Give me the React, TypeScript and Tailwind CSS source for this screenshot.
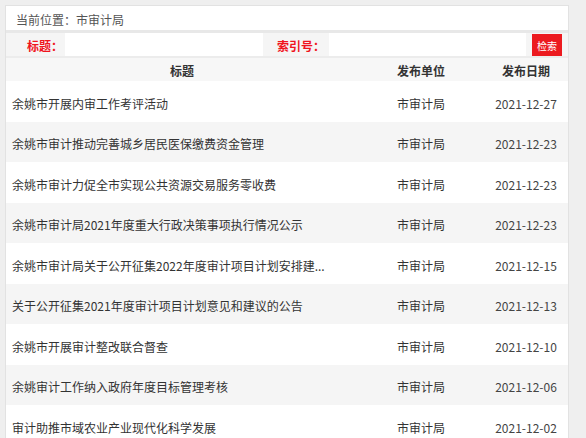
import React from "react";

type Article = {
  title: string;
  unit: string;
  date: string;
};

const ARTICLES: Article[] = [
  { title: "余姚市开展内审工作考评活动", unit: "市审计局", date: "2021-12-27" },
  { title: "余姚市审计推动完善城乡居民医保缴费资金管理", unit: "市审计局", date: "2021-12-23" },
  { title: "余姚市审计力促全市实现公共资源交易服务零收费", unit: "市审计局", date: "2021-12-23" },
  { title: "余姚市审计局2021年度重大行政决策事项执行情况公示", unit: "市审计局", date: "2021-12-23" },
  { title: "余姚市审计局关于公开征集2022年度审计项目计划安排建...", unit: "市审计局", date: "2021-12-15" },
  { title: "关于公开征集2021年度审计项目计划意见和建议的公告", unit: "市审计局", date: "2021-12-13" },
  { title: "余姚市开展审计整改联合督查", unit: "市审计局", date: "2021-12-10" },
  { title: "余姚审计工作纳入政府年度目标管理考核", unit: "市审计局", date: "2021-12-06" },
  { title: "审计助推市域农业产业现代化科学发展", unit: "市审计局", date: "2021-12-02" },
];

const FONT = "font-['Microsoft_YaHei','Noto_Sans_CJK_SC',sans-serif]";

export default function App() {
  return (
    <div className={`min-h-[438px] bg-[#efefef] pt-[5px] pl-[5px] pr-[17px] ${FONT}`}>
      <div className="border border-[#e2e2e2] bg-white">
        {/* breadcrumb */}
        <div className="flex h-[27px] items-center border-b-[3px] border-[#e8e8e8] pl-[10px] pt-[4px] text-[12px] text-[#555]">
          当前位置：市审计局
        </div>

        {/* search bar */}
        <div className="flex h-[25px] items-center border-b-[2px] border-[#ececec] bg-[#f5f5f5] text-[12px]">
          <span className="ml-[21px] w-[37px] pt-[3px] font-bold text-[#f0141e]">标题：</span>
          <input className="ml-[1px] h-[23px] w-[198px] bg-white outline-none" />
          <span className="ml-[14px] w-[52px] pt-[3px] font-bold text-[#f0141e]">索引号：</span>
          <input className="h-[23px] w-[197px] bg-white outline-none" />
          <button className="ml-[6px] flex h-[22px] w-[30px] items-center justify-center bg-[#ec1a1f] pt-[1px] text-[10px] text-white">
            检索
          </button>
        </div>

        {/* table header */}
        <div className="grid h-[23px] grid-cols-[352px_126px_1fr] items-center bg-[#f7f7f7] pt-[2px] text-[12px] font-bold text-[#333]">
          <div className="text-center">标题</div>
          <div className="text-center">发布单位</div>
          <div className="text-center">发布日期</div>
        </div>

        {/* rows */}
        {ARTICLES.map((a, i) => (
          <div
            key={a.title}
            className={`grid h-[40.5px] grid-cols-[352px_126px_1fr] items-center pt-[5px] text-[12px] text-[#333] ${
              i % 2 === 1 ? "bg-[#f5f5f5]" : "bg-white"
            }`}
          >
            <div className="truncate pl-[6px]">{a.title}</div>
            <div className="text-center">{a.unit}</div>
            <div className="text-center text-[#444]">{a.date}</div>
          </div>
        ))}
      </div>
    </div>
  );
}
